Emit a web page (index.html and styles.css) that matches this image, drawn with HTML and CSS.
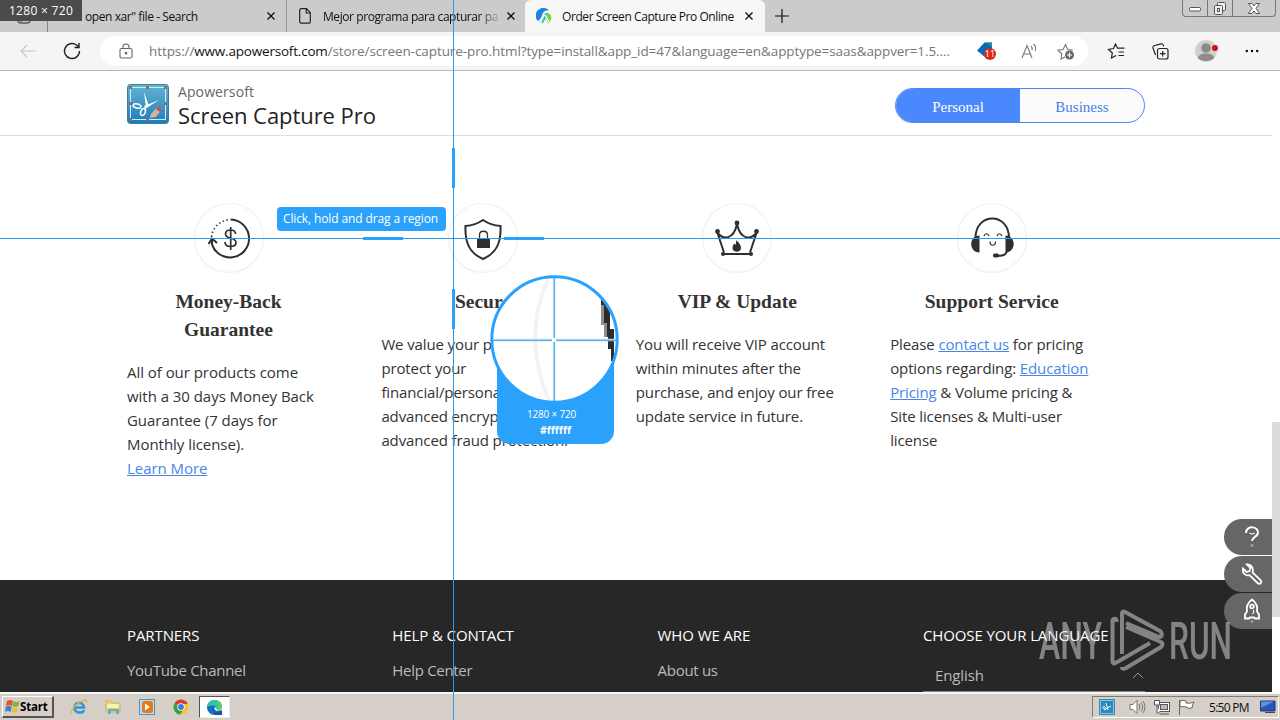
FILE: index.html
```html
<!DOCTYPE html>
<html lang="en">
<head>
    <meta charset="UTF-8">
    <meta name="viewport" content="width=device-width, initial-scale=1.0">
    <title>Order Screen Capture Pro Online</title>
    <link rel="stylesheet" href="styles.css">
</head>
<body>
    <div class="desktop">
        <!-- tabs -->
        <div class="tab-bar">
            <div class="tab-actions">
                <svg width="14" height="14" viewBox="0 0 14 14" fill="none" stroke="#222"><rect x="1" y="1" width="12" height="12" rx="2"/><path d="M1 4h12M4 4v8"/></svg>
            </div>
            <div class="tab tab-search">
                <span class="tab-title">open xar" file - Search</span>
                <svg class="close" viewBox="0 0 8 8"><path d="M.5.5l7 7M7.5.5l-7 7"/></svg>
            </div>
            <div class="tab tab-mejor">
                <svg width="12" height="16" viewBox="0 0 12 16" fill="none" stroke="#222" stroke-width="1.2"><path d="M2 .7h5.500l3.800 4v9a1.500 1.500 0 0 1-1.500 1.500H2A1.300 1.300 0 0 1 .7 14V2A1.300 1.300 0 0 1 2 .7zM7.300.8V5h4"/></svg>
                <span class="tab-title fade">Mejor programa para capturar pa</span>
                <svg class="close" viewBox="0 0 8 8"><path d="M.5.5l7 7M7.5.5l-7 7"/></svg>
            </div>
            <div class="tab tab-active">
                <svg width="16" height="16" viewBox="0 0 16 16"><path d="M1.800 13A7.500 7.500 0 0 1 13 2.300C9 2 7 4 6 7c-.8 3-2 5-4.200 6z" fill="#1d86dc"/><path d="M3 14c4-1 3-8 7-9 2-.5 4 1 5 4-.5 3-1.500 5-3 6l-2-5-3 5z" fill="#27c2b5"/><path d="M11 5c3 0 4.500 3 4.500 5-.5 2-1.500 4-3 5-1-2-1-3-2.500-5z" fill="#78d64b"/><path d="M4 14.500C7 13 6 8 9 7l4 7" fill="none" stroke="#fff" stroke-width="1.300"/></svg>
                <span class="tab-title">Order Screen Capture Pro Online</span>
                <svg class="close" viewBox="0 0 8 8"><path d="M.5.5l7 7M7.5.5l-7 7"/></svg>
            </div>
            <svg class="new-tab" width="14" height="14" viewBox="0 0 14 14" stroke="#111" stroke-width="1.200"><path d="M7 0v14M0 7h14"/></svg>
            <div class="window-buttons">
                <span class="win-btn"><svg width="12" height="12" viewBox="0 0 12 12" fill="#fff" stroke="#555"><rect x=".5" y="5.500" width="11" height="3.500" rx="1"/></svg></span>
                <span class="win-btn"><svg width="14" height="13" viewBox="0 0 14 13" fill="#eee" stroke="#555"><rect x="4.500" y=".5" width="8" height="8" rx="1"/><rect x="1.500" y="3.500" width="8" height="9" rx="1"/><rect x="4.500" y="6.500" width="2" height="3"/></svg></span>
                <span class="win-btn wide"><svg width="12" height="11" viewBox="0 0 12 11" fill="#fff" stroke="#555"><path d="M.5.5h3.500l2 2.500 2-2.500h3.500L8 5.500l3.500 5H8L6 8l-2 2.500H.5L4 5.500z"/></svg></span>
            </div>
        </div>

        <!-- address bar -->
        <div class="toolbar">
            <svg class="back" width="16" height="14" viewBox="0 0 16 14" fill="none" stroke="#c8c8c8" stroke-width="1.200"><path d="M16 7H1M7 1L1 7l6 6"/></svg>
            <svg class="reload" width="18" height="18" viewBox="0 0 18 18" fill="none" stroke="#222" stroke-width="1.400"><path d="M16.500 9A7.500 7.500 0 1 1 13.500 3l2 2M16 1v4.500h-4.500"/></svg>
            <div class="address">
                <svg class="lock" width="14" height="16" viewBox="0 0 14 16" fill="none" stroke="#666" stroke-width="1.100"><rect x="1" y="5.500" width="12" height="9.500" rx="1.500"/><path d="M4 5.500V4a3 3 0 0 1 6 0v1.500"/><circle cx="7" cy="10.200" r=".8" fill="#666"/></svg>
                <span class="url">https://<b>www.apowersoft.com</b>/store/screen-capture-pro.html?type=install&amp;app_id=47&amp;language=en&amp;apptype=saas&amp;appver=1.5....</span>
                <svg class="shop" width="22" height="20" viewBox="0 0 22 20"><path d="M1 9.500L8.500 1.500H16v11L10 17z" fill="#0c67b4"/><path d="M10 1.500h6v5l-2-2z" fill="#199a8c"/><circle cx="14" cy="13" r="6" fill="#d62c20"/><text x="14" y="16.200" text-anchor="middle" class="badge-num">11</text></svg>
                <svg class="read" width="18" height="16" viewBox="0 0 18 16" fill="none" stroke="#777" stroke-width="1.100"><path d="M1 15L6 2.500 11 15M2.700 11h6.600M10 3c1 1 1.500 2.500 1 4M12.500 1c2 2 2.500 5 1.500 7"/></svg>
                <svg class="fav" width="18" height="17" viewBox="0 0 18 17" fill="none" stroke="#777" stroke-width="1.100"><path d="M8 14l-4 2 .8-5L1 7.200l5-.7L8.500 1.500l2.200 5 5 .6"/><circle cx="12.500" cy="12" r="4.500" fill="#666" stroke="none"/><path d="M10 12h5M12.500 9.500v5" stroke="#fff"/></svg>
            </div>
            <svg class="favlist" width="18" height="16" viewBox="0 0 18 16" fill="none" stroke="#222" stroke-width="1.200"><path d="M9 12.500l-4.500 2.500.8-5L1.500 6.300l5-.8L8.500 1l2 4.200h7M11.500 9h5.500M11.500 12.500h5.500"/></svg>
            <svg class="collections" width="17" height="17" viewBox="0 0 17 17" fill="none" stroke="#222" stroke-width="1.200"><rect x="5.500" y="5.500" width="10.500" height="10.500" rx="2"/><path d="M10.700 8v5.500M8 10.700h5.500M3.500 12L1 5a2 2 0 0 1 1-2.300L9 .8a2 2 0 0 1 2.300 1.500l.4 1"/></svg>
            <svg class="profile" width="24" height="24" viewBox="0 0 24 24"><circle cx="12" cy="12" r="11" fill="#d0d0d0"/><circle cx="12" cy="9" r="4.800" fill="#8c8c8c"/><path d="M4 19c0-6 16-6 16 0-3 4-13 4-16 0z" fill="#8c8c8c"/><circle cx="21" cy="9" r="3" fill="#d80e18"/></svg>
            <svg class="more" width="14" height="4" viewBox="0 0 14 4"><circle cx="1.800" cy="2" r="1.200"/><circle cx="7" cy="2" r="1.200"/><circle cx="12.200" cy="2" r="1.200"/></svg>
        </div>

        <!-- page -->
        <div class="viewport">
            <div class="page">
                <div class="product-header">
                    <svg class="logo" width="42" height="40" viewBox="0 0 42 40">
                        <defs><linearGradient id="logoBg" x1="0" y1="0" x2="0" y2="1"><stop offset="0" stop-color="#64b4d2"/><stop offset="1" stop-color="#1c7cba"/></linearGradient></defs>
                        <rect x=".5" y=".5" width="41" height="39" rx="3" fill="url(#logoBg)" stroke="#397f9f"/>
                        <rect x="3.500" y="3.500" width="35" height="32" fill="none" stroke="#d5edf5"/>
                        <g fill="#8a6a6c"><rect x="2" y="2" width="3" height="3"/><rect x="19" y="2" width="3" height="3"/><rect x="37" y="2" width="3" height="3"/><rect x="2" y="18" width="3" height="3"/><rect x="37" y="18" width="3" height="3"/><rect x="2" y="34" width="3" height="3"/><rect x="19" y="34" width="3" height="3"/></g>
                        <path d="M17 8l5 14-3 2zM32 16L18 25l-1-3z" fill="#fff"/>
                        <ellipse cx="10" cy="22" rx="4" ry="2" fill="none" stroke="#fff" stroke-width="1.500" transform="rotate(12 10 22)"/><ellipse cx="16" cy="28" rx="2.300" ry="3.500" fill="none" stroke="#fff" stroke-width="1.500" transform="rotate(20 16 28)"/>
                        <path d="M24 30l7-8 4 3-6 8-6 1z" fill="#d7b19a"/><path d="M31 22l4 3-2 3-4-3z" fill="#a65c60"/>
                    </svg>
                    <div class="product-name">
                        <div class="brand">Apowersoft</div>
                        <div class="product">Screen Capture Pro</div>
                    </div>
                    <div class="plan-switch">
                        <span class="plan active">Personal</span>
                        <span class="plan">Business</span>
                    </div>
                </div>

                <div class="features">
                    <div class="feature">
                        <svg class="feature-icon" viewBox="0 0 70 70" fill="none" stroke="#2f2f2f" stroke-width="2">
                            <circle class="ring" cx="35" cy="35" r="34.500"/>
                            <path d="M37 16.500a19 19 0 1 1-19.500 23"/><path d="M17.500 34c1-10 9-17 19.500-17.500" stroke-dasharray="1.500 2.500" stroke-width="1.500"/><path d="M14.500 41l3.500-5.500 5 4.500M18 36v5"/>
                            <path d="M41.500 31c0-3-2-4-5-4-3.500 0-5 1.700-5 4 0 6 10.500 2.500 10.500 8.500 0 2.500-2 4-5.500 4s-5.500-1.500-5.500-4.500M36.700 24v23" stroke-width="1.700"/>
                        </svg>
                        <h3>Money-Back<br>Guarantee</h3>
                        <p>All of our products come<br>with a 30 days Money Back<br>Guarantee (7 days for<br>Monthly license).<br><a href="#">Learn More</a></p>
                    </div>
                    <div class="feature">
                        <svg class="feature-icon" viewBox="0 0 70 70" fill="none" stroke="#2f2f2f" stroke-width="2">
                            <circle class="ring" cx="35" cy="35" r="34.500"/>
                            <path d="M35 17c5 3.500 11 5.500 17.500 6 .7 17-4 27-17.500 33-13.500-6-18.200-16-17.500-33 6.500-.5 12.500-2.500 17.500-6z"/>
                            <rect x="29" y="35" width="13" height="10" fill="#2f2f2f" stroke="none"/><path d="M31.500 35v-3c0-5 8-5 8 0v3" stroke-width="1.300"/>
                        </svg>
                        <h3>Secure</h3>
                        <p>We value your privacy and<br>protect your<br>financial/personal data with<br>advanced encryption and<br>advanced fraud protection.</p>
                    </div>
                    <div class="feature">
                        <svg class="feature-icon" viewBox="0 0 70 70" fill="none" stroke="#2f2f2f" stroke-width="2">
                            <circle class="ring" cx="35" cy="35" r="34.500"/>
                            <path d="M20.500 51h28.500M22 49.500L15.500 30c6 7 16 7 19.500-9 3.500 16 13.500 16 19.500 9L48 49.500"/>
                            <g fill="#2f2f2f" stroke="none"><circle cx="35" cy="20" r="2.400"/><circle cx="15.500" cy="28.500" r="2.400"/><circle cx="54.500" cy="28.500" r="2.400"/><circle cx="21" cy="51" r="2"/><circle cx="49" cy="51" r="2"/><path d="M34.500 37c1 2 4.500 4 4.500 8 0 5-8.500 5-8.500 0 0-2 1-3 1.500-4.500l1.500 1.500z"/></g>
                        </svg>
                        <h3>VIP &amp; Update</h3>
                        <p>You will receive VIP account<br>within minutes after the<br>purchase, and enjoy our free<br>update service in future.</p>
                    </div>
                    <div class="feature">
                        <svg class="feature-icon" viewBox="0 0 70 70" fill="none" stroke="#2f2f2f" stroke-width="2">
                            <circle class="ring" cx="35" cy="35" r="34.500"/>
                            <path d="M18.500 35c0-26 33.500-26 33.500 0M50 48c-1 4-4 5-11 5"/>
                            <g fill="#2f2f2f" stroke="none"><path d="M22.500 32.500v17c-11 0-11-17 0-17zM48.500 32.500v17c11 0 11-17 0-17z"/><rect x="36" y="50.500" width="6" height="4" rx="1.800"/></g>
                            <path d="M27 33c1-3 4-3 5 0M40 33c1-3 4-3 5 0M33 38.500c0 5 5.500 5 5.500 0" stroke-width="1.200"/>
                        </svg>
                        <h3>Support Service</h3>
                        <p>Please <a href="#">contact us</a> for pricing<br>options regarding: <a href="#">Education</a><br><a href="#">Pricing</a> &amp; Volume pricing &amp;<br>Site licenses &amp; Multi-user<br>license</p>
                    </div>
                </div>

                <div class="footer">
                    <div class="footer-col"><h4>PARTNERS</h4><span>YouTube Channel</span></div>
                    <div class="footer-col"><h4>HELP &amp; CONTACT</h4><span>Help Center</span></div>
                    <div class="footer-col"><h4>WHO WE ARE</h4><span>About us</span></div>
                    <div class="footer-col">
                        <h4>CHOOSE YOUR LANGUAGE</h4>
                        <div class="language">English <svg width="12" height="7" viewBox="0 0 12 7" fill="none" stroke="#999"><path d="M1 6l5-5 5 5"/></svg></div>
                    </div>
                </div>
            </div>
            <div class="scrollbar"><div class="thumb"></div></div>
        </div>

        <!-- taskbar -->
        <div class="taskbar">
            <div class="start">
                <svg width="15" height="15" viewBox="0 0 15 15"><path d="M2 2c2-1.500 4-1 6 0L7 7C5 6 3 6 .8 7z" fill="#e0562b"/><path d="M8.500 2.300c2 1 4 1 6 0l-1.200 5c-2 1-4 1-5.800 0z" fill="#7fb63b"/><path d="M.7 7.800c2-1 4-1 6 0l-1 5c-2-1-4-1-5.500 0z" fill="#3c82cf"/><path d="M7.400 8.200c2 1 4 1 5.700 0L12 13c-2 1-4 1-5.600 0z" fill="#efbf35"/></svg>
                <span>Start</span>
            </div>
            <div class="quick">
                <svg width="18" height="18" viewBox="0 0 18 18" fill="none"><path d="M14 12c-1.500 4-9.500 3.500-9.500-2.500S13.500 3 14 9.500H5" stroke="#3797d5" stroke-width="2.700"/><path d="M2 16C-1 12 9 3 15 2c3 0 1 3 1 3" stroke="#dfb944" stroke-width="1.300"/></svg>
                <svg width="18" height="18" viewBox="0 0 18 18"><path d="M2 3h5l1 2h8v9H2z" fill="#edcf70" stroke="#c8a84c" stroke-width=".6"/><path d="M3 6h12v4H3z" fill="#fbf1ac"/><path d="M4 16v-5h11v5h-3v-3H7v3z" fill="#64afd0"/></svg>
                <svg width="18" height="18" viewBox="0 0 18 18"><rect x="1.500" y="1.500" width="15" height="15" fill="#b9daf2" stroke="#4c91c8"/><rect x="4" y="3" width="11" height="12" rx="3" fill="#ec7813"/><path d="M7 5.500l5 3.500-5 3.500z" fill="#fff"/></svg>
                <svg width="18" height="18" viewBox="0 0 18 18"><circle cx="9" cy="9" r="7.500" fill="#f4c62b"/><path d="M9 9L2.500 5.200A7.500 7.500 0 0 1 15.800 6H9z" fill="#dc3c31"/><path d="M9 9L2.500 5.200A7.500 7.500 0 0 0 8 16.500l4-6z" fill="#35a153"/><circle cx="9" cy="9" r="3.700" fill="#fff"/><circle cx="9" cy="9" r="2.900" fill="#3b79dc"/></svg>
                <div class="task-active">
                    <svg width="17" height="17" viewBox="0 0 18 18"><circle cx="9" cy="9" r="8" fill="#1571ba"/><path d="M1 9C2-2 17-1 17 8c0 4-5 4.500-6.500 3 1-2 0-4-3-4-3 0-6 1-6.500 2z" fill="#31c4aa"/><path d="M10 1.200c5 .5 7 4 7 7 0 3-4 4-6 3 3-3 2-7-1-10z" fill="#61cf68"/><path d="M7.500 8C5 12 9 15 15 13l2-1v5H9z" fill="#1556a0"/><path d="M9.500 8.500C7.500 11 11 14 16.500 11.500l1.500 2V9l-3 2.500c-3 1-4.500-.5-4-2z" fill="#fff"/></svg>
                </div>
            </div>
            <div class="tray">
                <svg width="16" height="16" viewBox="0 0 16 16"><rect width="16" height="16" rx="1" fill="#2b89bb"/><path d="M1.500 1.500h13v13h-13z" fill="none" stroke="#80c8e0"/><path d="M7 4l2 7M12 7l-7 4" stroke="#fff" fill="none"/><circle cx="5" cy="8.500" r="1.200" stroke="#d5edf5" fill="none"/></svg>
                <svg class="volume" width="17" height="16" viewBox="0 0 17 16" fill="#fff" stroke="#777"><path d="M1 5.500h3l4-4v13l-4-4H1z"/><path d="M10 5q2 3 0 6M12 3.500q3.500 4.500 0 9M14 2q4 6 0 12" fill="none"/></svg>
                <svg width="16" height="16" viewBox="0 0 16 16" fill="#fff" stroke="#555"><rect x="4.500" y="3.500" width="11" height="9" /><rect x="6.500" y="5.500" width="7" height="5" fill="#bbb"/><path d="M6 15h9M.5 1.500h5V6h-5zM3 6v8h3"/></svg>
                <svg width="17" height="16" viewBox="0 0 17 16" fill="#fff" stroke="#666"><path d="M1.500 1v15"/><path d="M2 2q3-1.500 6 0v2q3 1 8-1-2 3-2 6-3 1-6-1V8q-3-1-6 0z"/></svg>
                <span class="clock">5:50 PM</span>
                <svg width="16" height="14" viewBox="0 0 16 14"><path d="M.5 1h14.500v10H.5z" fill="#2457b8" stroke="#22356b"/><path d="M1 1.500h13L1 8z" fill="#5b91dd"/><path d="M5 12.500h10" stroke="#445"/></svg>
            </div>
        </div>

        <!-- side buttons -->
        <div class="side-buttons">
            <div class="side-button"><svg width="20" height="24" viewBox="0 0 20 24" fill="none" stroke="#fff" stroke-width="2"><path d="M4 8c0-8 13-7 12 0-.5 4-6 4-6 8"/><path d="M7.500 8q2.500 2 5 0" stroke-width="1.200"/><circle cx="10" cy="20.500" r="1" stroke="#bbb" stroke-width="1"/></svg></div>
            <div class="side-button"><svg width="22" height="24" viewBox="0 0 22 24" fill="none" stroke="#fff" stroke-width="1.800"><path d="M6 2.500l3.500 3.500-1 3-3 1L2 6.500c-1 5 3 8 6.500 6.500l8 8c2.500 2 5-.5 3-3l-8-7.500C13 6 10 2 6 2.500z"/></svg></div>
            <div class="side-button"><svg width="20" height="26" viewBox="0 0 20 26" fill="none" stroke="#fff" stroke-width="1.800"><path d="M10 1.500c-4 3-6 7-5 12l-2 3v4h4l1-1h4l1 1h4v-4l-2-3c1-5-1-9-5-12z"/><circle cx="10" cy="8.500" r="1.800"/><path d="M11.500 12q1 2-1 4" stroke-width="1.200"/><circle cx="10" cy="23.500" r="1.300" fill="#aaa" stroke="none"/></svg></div>
        </div>

        <!-- watermark -->
        <svg class="watermark" width="200" height="64" viewBox="0 0 200 64">
            <text x="1" y="50" textLength="63" lengthAdjust="spacingAndGlyphs">ANY</text>
            <text x="131" y="50" textLength="63" lengthAdjust="spacingAndGlyphs">RUN</text>
            <path d="M78.500 13v-2c-1-2-4-1-4 1v40c0 2 1 3 3 2l34.500-20M84 45V5c0-2 1-3 3-2l35 19c3 2 2 6-1 6L88 14M88 18l35 15c2 1 2 3 0 5L88 59c-2 1-4 1-4-1M81 51"/>
        </svg>

        <!-- capture overlay -->
        <div class="line-h"></div>
        <div class="line-v"></div>
        <div class="mark mark-left"></div>
        <div class="mark mark-right"></div>
        <div class="mark mark-top"></div>
        <div class="mark mark-bottom"></div>
        <div class="hint">Click, hold and drag a region</div>
        <div class="size-label">1280 × 720</div>
        <div class="magnifier">
            <div class="magnifier-info">
                <span>1280 × 720</span>
                <b>#ffffff</b>
            </div>
            <svg class="lens" width="129" height="129" viewBox="0 0 129 129">
                <defs><clipPath id="lensClip"><circle cx="64.500" cy="64.500" r="62"/></clipPath></defs>
                <circle cx="64.500" cy="64.500" r="62.500" fill="#fff"/>
                <g clip-path="url(#lensClip)">
                    <path d="M58 4Q32 62 59 126" fill="none" stroke="#f3f3f3" stroke-width="4"/>
                    <path d="M111 20h5v12h4v22h4v32h-3V74h-3V62h-3V48h-4z" fill="#2c2c2c"/>
                    <path d="M111 30h3v18h3v14h-3V50h-3z" fill="#928d89"/>
                    <path d="M0 65h129M64 0v129" stroke="#a8d7fa" stroke-width="2.400"/>
                    <path d="M0 65.500h129M64.500 0v129" stroke="#55aeea" stroke-width="1"/>
                    <rect x="62" y="63" width="4" height="4" fill="#fff"/>
                </g>
                <circle cx="64.500" cy="64.500" r="62.700" fill="none" stroke="#2aa2fb" stroke-width="3"/>
            </svg>
        </div>
    </div>
</body>
</html>
```
FILE: styles.css
```css
* {
    box-sizing: border-box;
}
body {
    margin: 0;
    font-family: 'Open Sans', 'Noto Sans', sans-serif;
    color: #333;
}
svg {
    display: block;
    flex: none;
}
.desktop {
    position: relative;
    width: 1280px;
    height: 720px;
    overflow: hidden;
    display: flex;
    flex-direction: column;
    background: #fff;
}

/* tabs */
.tab-bar {
    height: 32px;
    flex: none;
    display: flex;
    background: #cbcbcb;
    font-size: 12px;
    color: #111;
    white-space: nowrap;
}
.tab-actions {
    width: 48px;
    padding: 10px 0 0 17px;
    border-right: 1px solid #888;
}
.tab {
    display: flex;
    align-items: center;
}
.tab-title {
    letter-spacing: -0.42px;
}
.close {
    width: 8px;
    height: 8px;
    margin-left: auto;
    stroke: #111;
    stroke-width: 1.4;
}
.tab-search {
    width: 239px;
    padding: 0 11px 0 37px;
    border-right: 1px solid #999;
}
.tab-mejor {
    width: 238px;
    gap: 12px;
    padding: 0 9px 0 12px;
}
.tab-mejor .close {
    margin-left: -4px;
}
.fade {
    width: 176px;
    -webkit-mask-image: linear-gradient(to right, #000 155px, transparent 180px);
    mask-image: linear-gradient(to right, #000 155px, transparent 180px);
}
.tab-active {
    width: 240px;
    padding: 0 12px 0 11px;
    gap: 10px;
    background: #f7f7f7;
    border-radius: 6px 6px 0 0;
}
.new-tab {
    margin: 9px 0 0 10px;
}
.window-buttons {
    display: flex;
    height: 17px;
    margin: 0 4px 0 auto;
    border: 1px solid #777;
    border-top: 0;
    border-radius: 0 0 4px 4px;
}
.win-btn {
    width: 25px;
    display: flex;
    align-items: center;
    justify-content: center;
    border-right: 1px solid #777;
}
.win-btn.wide {
    width: 42px;
    border-right: 0;
}

/* address bar */
.toolbar {
    height: 39px;
    flex: none;
    display: flex;
    align-items: center;
    background: #f5f5f5;
    border-bottom: 1px solid #b8b8b8;
}
.back {
    margin-left: 20px;
}
.reload {
    margin-left: 27px;
}
.address {
    width: 988px;
    height: 30px;
    margin-left: 19px;
    padding-left: 19px;
    display: flex;
    align-items: center;
    background: #fff;
    border-radius: 15px;
}
.url {
    width: 812px;
    margin-left: 16px;
    font-size: 13.5px;
    letter-spacing: -0.09px;
    color: #767676;
    white-space: nowrap;
}
.url b {
    font-weight: normal;
    letter-spacing: -0.2px;
    color: #111;
}
.shop {
    margin-left: 15px;
}
.badge-num {
    font: 9px 'Open Sans', sans-serif;
    fill: #fff;
}
.read {
    margin-left: 23px;
}
.fav {
    margin-left: 18px;
}
.favlist {
    margin-left: 19px;
}
.collections {
    margin-left: 27px;
}
.profile {
    margin-left: 25px;
}
.more {
    margin-left: 27px;
}

/* page */
.viewport {
    height: 621px;
    flex: none;
    display: flex;
}
.page {
    width: 1272px;
    display: flex;
    flex-direction: column;
}
.scrollbar {
    width: 8px;
    padding-top: 351px;
    background: #fff;
}
.thumb {
    height: 195px;
    background: #dcdcdc;
}
.product-header {
    height: 65px;
    padding: 0 127px;
    display: flex;
    border-bottom: 1px solid #dedede;
}
.logo {
    margin-top: 13px;
}
.product-name {
    margin: 10px 0 0 9px;
    white-space: nowrap;
}
.brand {
    font-size: 14px;
    line-height: 22px;
    letter-spacing: 0.1px;
    color: #666;
}
.product {
    font-size: 22px;
    line-height: 25px;
    letter-spacing: -0.06px;
    color: #222;
}
.plan-switch {
    width: 250px;
    height: 35px;
    margin: 17px 0 0 auto;
    display: flex;
    border: 1px solid #4a86fa;
    border-radius: 18px;
    overflow: hidden;
    background: #fbfbfb;
    font: 15px/36px 'Liberation Serif', serif;
    color: #4a7fe8;
    text-align: center;
}
.plan {
    width: 50%;
}
.plan.active {
    background: #4a88fe;
    color: #fff;
}
.features {
    height: 444px;
    padding: 67px 0 0 127px;
    display: grid;
    grid-template-columns: repeat(4, 203px);
    column-gap: 51.4px;
}
.feature-icon {
    width: 70px;
    height: 70px;
    margin: 0 auto;
}
.feature-icon .ring {
    stroke: #f3f3f3;
    stroke-width: 1.5;
}
.feature h3 {
    margin: 15px 0 16px;
    font: bold 19.5px/28px 'Liberation Serif', serif;
    text-align: center;
    white-space: nowrap;
}
.feature p {
    margin: 0;
    font-size: 15px;
    line-height: 24px;
    letter-spacing: -0.12px;
    white-space: nowrap;
}
.feature:first-child p {
    letter-spacing: -0.04px;
}
.feature a {
    color: #4a86e8;
}
.footer {
    height: 112px;
    padding: 43px 127px 0;
    display: grid;
    grid-template-columns: repeat(3, 265.3px) 222px;
    background: #272727;
    font-size: 15px;
    letter-spacing: -0.1px;
    color: #bbb;
    white-space: nowrap;
}
.footer h4 {
    margin: 0 0 12px;
    font-size: 15px;
    line-height: 24px;
    font-weight: normal;
    color: #fff;
}
.footer span {
    line-height: 22px;
    letter-spacing: -0.3px;
}
.language {
    height: 33px;
    padding: 0 1px 0 12px;
    display: flex;
    align-items: center;
    justify-content: space-between;
    border-bottom: 1px solid #888;
}

/* taskbar */
.taskbar {
    height: 28px;
    flex: none;
    display: flex;
    align-items: center;
    background: #d5cfc7;
    border-top: 2px solid #f6f6f4;
}
.start {
    width: 52px;
    height: 22px;
    margin-left: 2px;
    padding-left: 2px;
    display: flex;
    align-items: center;
    border: 1px solid #fff;
    border-right: 2px solid #555;
    border-bottom: 2px solid #555;
    font: bold 11.5px 'Open Sans', sans-serif;
    letter-spacing: -0.2px;
    color: #000;
}
.quick {
    display: flex;
    align-items: center;
    gap: 16px;
    margin-left: 16px;
}
.task-active {
    width: 31px;
    height: 22px;
    margin-left: -7px;
    display: flex;
    align-items: center;
    justify-content: center;
    background: #fff;
    border: 1px solid #555;
    border-right-color: #eee;
    border-bottom-color: #eee;
}
.tray {
    width: 187px;
    height: 22px;
    margin: 0 1px 0 auto;
    padding: 0 2px 0 6px;
    display: flex;
    align-items: center;
    gap: 8px;
    border: 1px solid #807b72;
    border-right-color: #fff;
    border-bottom-color: #fff;
}
.volume {
    margin-left: 6px;
}
.clock {
    margin: 0 3px 0 6px;
    font-size: 12px;
    letter-spacing: -0.7px;
    white-space: nowrap;
    color: #111;
}

/* side buttons */
.side-buttons {
    position: absolute;
    left: 1224px;
    top: 519px;
    display: flex;
    flex-direction: column;
    gap: 1px;
}
.side-button {
    width: 48px;
    height: 36px;
    display: flex;
    align-items: center;
    justify-content: center;
    padding-left: 8px;
    background: #666;
    border-radius: 18px 0 0 18px;
}
.watermark {
    position: absolute;
    left: 1038px;
    top: 609px;
    opacity: 0.5;
}
.watermark text {
    font: 500 52px Roboto, sans-serif;
    fill: #e0e0e0;
}
.watermark path {
    fill: none;
    stroke: #e0e0e0;
    stroke-width: 4;
    stroke-linejoin: round;
}

/* capture overlay */
.line-h {
    position: absolute;
    left: 0;
    top: 238px;
    width: 1280px;
    height: 1px;
    background: #2f98ea;
}
.line-v {
    position: absolute;
    left: 453px;
    top: 0;
    width: 1px;
    height: 720px;
    background: #2f98ea;
}
.mark {
    position: absolute;
    background: #2aa2fb;
}
.mark-left, .mark-right {
    top: 237px;
    width: 40px;
    height: 3px;
}
.mark-top, .mark-bottom {
    left: 452px;
    width: 3px;
    height: 40px;
}
.mark-left { left: 363px; }
.mark-right { left: 504px; }
.mark-top { top: 148px; }
.mark-bottom { top: 289px; }
.hint {
    position: absolute;
    left: 277px;
    top: 207px;
    width: 169px;
    height: 24px;
    padding-right: 2px;
    border-radius: 4px;
    background: #2aa2fb;
    color: #fff;
    font-size: 12px;
    line-height: 23px;
    letter-spacing: -0.12px;
    text-align: center;
    white-space: nowrap;
}
.size-label {
    position: absolute;
    left: 0;
    top: 0;
    width: 82px;
    height: 21px;
    background: #4b4b4b;
    color: #fff;
    font-size: 12px;
    line-height: 21px;
    letter-spacing: 0.3px;
    text-align: center;
}
.magnifier {
    position: absolute;
    left: 490px;
    top: 275px;
    width: 129px;
    height: 169px;
}
.magnifier-info {
    position: absolute;
    left: 7px;
    top: 65px;
    width: 117px;
    height: 104px;
    padding-top: 66px;
    display: flex;
    flex-direction: column;
    align-items: center;
    background: #2aa2fb;
    border-radius: 0 0 13px 13px;
    color: #fff;
    font-size: 10px;
    line-height: 16px;
}
.magnifier-info span {
    margin-left: -8px;
    letter-spacing: -0.2px;
}
.magnifier-info b {
    font-size: 10.5px;
}
.lens {
    position: relative;
}
```
